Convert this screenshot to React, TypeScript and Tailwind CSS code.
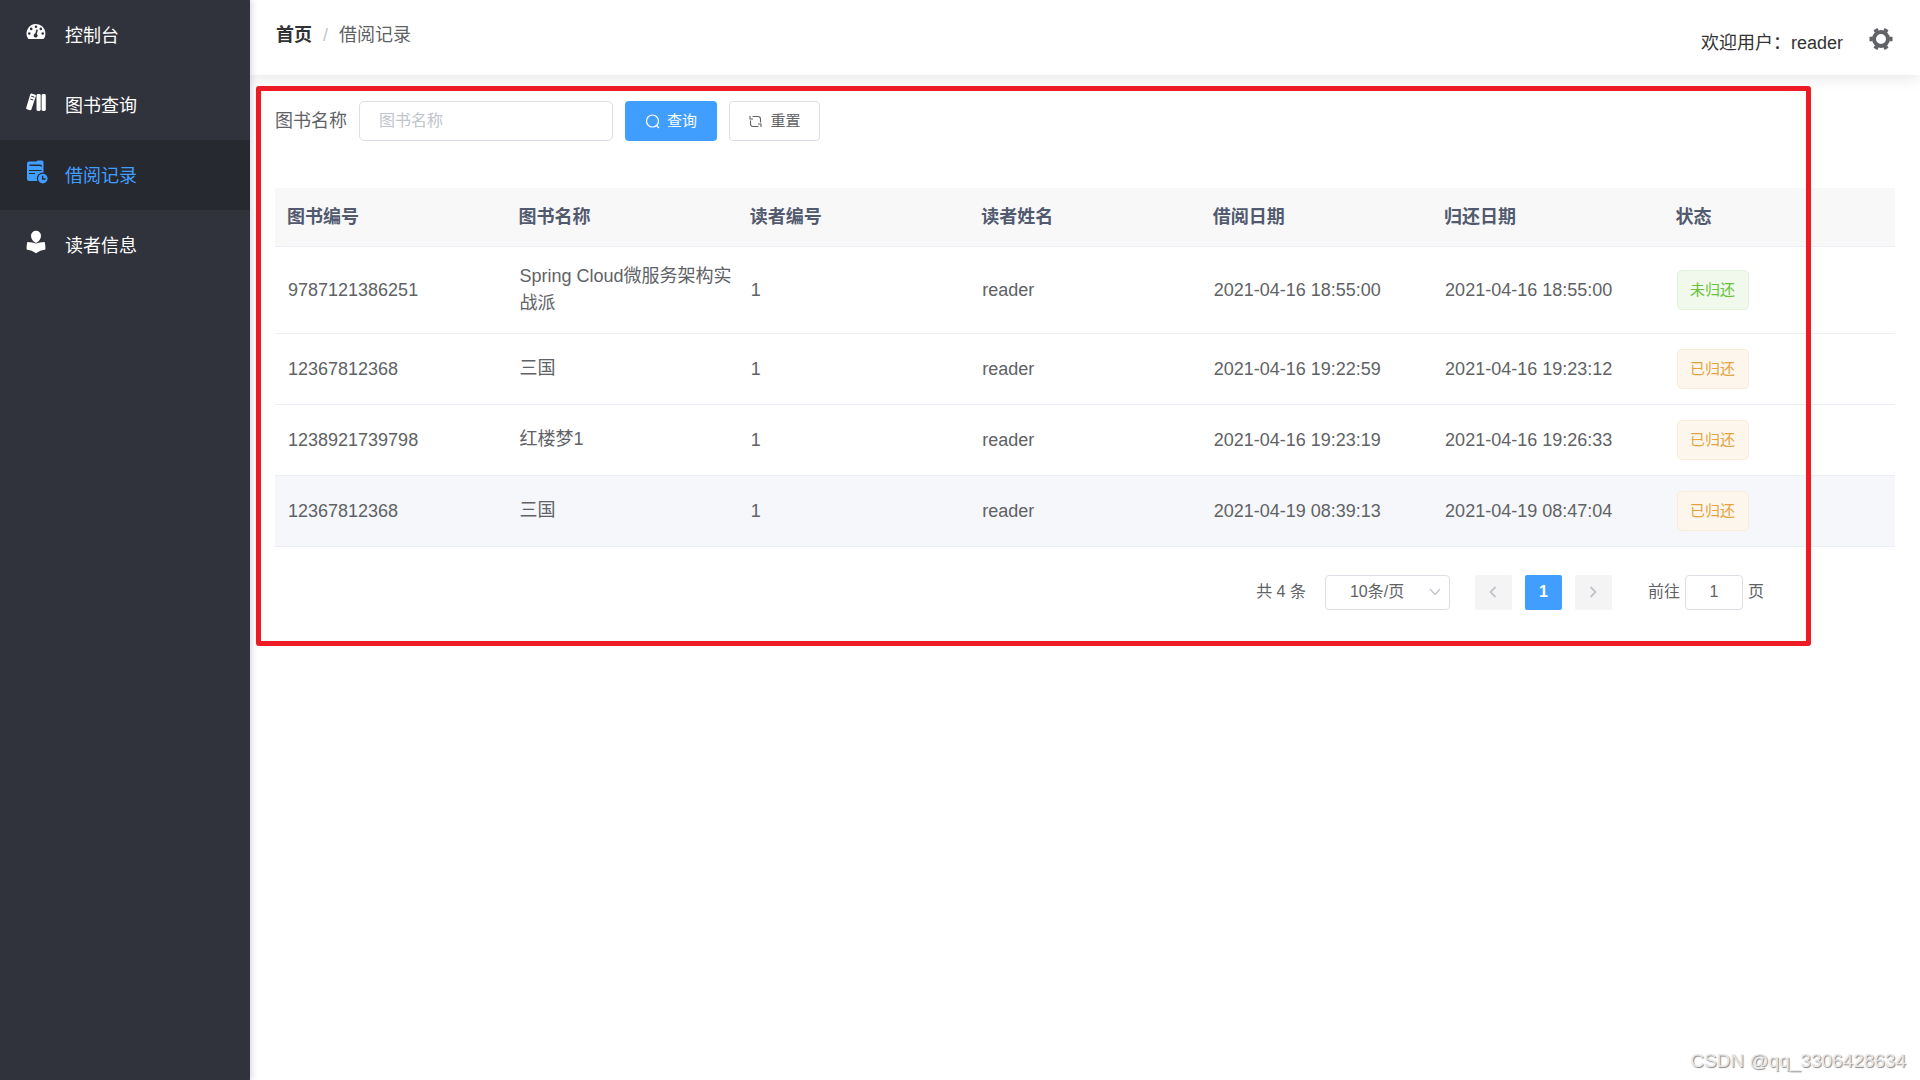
import * as React from "react";
import clsx from "clsx";

interface BorrowRecord {
  isbn: string;
  title: string;
  readerId: string;
  readerName: string;
  borrowedAt: string;
  returnedAt: string;
  returned: boolean;
}

const columns = ["图书编号", "图书名称", "读者编号", "读者姓名", "借阅日期", "归还日期", "状态"];

const records: BorrowRecord[] = [
  {
    isbn: "9787121386251",
    title: "Spring Cloud微服务架构实战派",
    readerId: "1",
    readerName: "reader",
    borrowedAt: "2021-04-16 18:55:00",
    returnedAt: "2021-04-16 18:55:00",
    returned: false,
  },
  {
    isbn: "12367812368",
    title: "三国",
    readerId: "1",
    readerName: "reader",
    borrowedAt: "2021-04-16 19:22:59",
    returnedAt: "2021-04-16 19:23:12",
    returned: true,
  },
  {
    isbn: "1238921739798",
    title: "红楼梦1",
    readerId: "1",
    readerName: "reader",
    borrowedAt: "2021-04-16 19:23:19",
    returnedAt: "2021-04-16 19:26:33",
    returned: true,
  },
  {
    isbn: "12367812368",
    title: "三国",
    readerId: "1",
    readerName: "reader",
    borrowedAt: "2021-04-19 08:39:13",
    returnedAt: "2021-04-19 08:47:04",
    returned: true,
  },
];

function DashboardIcon() {
  return (
    <svg viewBox="0 0 20 20" className="size-5" aria-hidden="true">
      <path
        fill="currentColor"
        fillRule="evenodd"
        d="M10 2a9.5 9.5 0 0 1 9.4 9.5c0 1.9-.5 3.6-1.4 5.1q-.3.4-.8.4H2.800q-.5 0-.8-.4A9.500 9.500 0 0 1 10 2Zm0 1.500a1.300 1.300 0 1 0 0 2.600 1.300 1.300 0 0 0 0-2.600ZM5.200 5.600a1.300 1.300 0 1 0 0 2.600 1.300 1.300 0 0 0 0-2.600Zm9.600 0a1.300 1.300 0 1 0 0 2.600 1.300 1.300 0 0 0 0-2.600ZM3.300 10.200a1.300 1.300 0 1 0 0 2.600 1.300 1.300 0 0 0 0-2.600Zm13.400 0a1.300 1.300 0 1 0 0 2.600 1.300 1.300 0 0 0 0-2.600ZM10.400 7.400l-1.100 4.200a2 2 0 1 0 1.500.3l1.100-4.200Z"
      />
    </svg>
  );
}

function BooksIcon() {
  return (
    <svg viewBox="0 0 20 20" className="size-5" aria-hidden="true">
      <rect x="10.500" y="2" width="4.200" height="17" rx="1.400" fill="currentColor" />
      <rect x="15.600" y="2" width="4.200" height="17" rx="1.400" fill="currentColor" />
      <path
        fill="currentColor"
        d="M5.600 1.500 9.200 2.700q1 .4.700 1.400L5.400 17.500q-.5 1-1.500.7L1 17.300Q-.2 16.800.2 15.800L4.300 2.300Q4.700 1.200 5.600 1.500Z"
      />
      <path d="m5.200 4.200 3.200 1M4.300 7l3 1" stroke="#30333c" strokeWidth="1" />
    </svg>
  );
}

function RecordIcon() {
  return (
    <svg viewBox="0 0 22 24" className="h-6 w-[22px]" aria-hidden="true">
      <path
        fill="currentColor"
        d="M3 1.500h7.500l1-1h4.500q1.500 0 1.500 1.500v19H3q-2 0-2-2v-15.500q0-2 2-2Z"
      />
      <path d="M3.500 5.200h10q2 0 2 1.300" fill="none" stroke="#272930" strokeWidth="1.400" />
      <path d="M3 10.500h12.500M3 13.500h6" stroke="#272930" strokeWidth="1.200" />
      <circle cx="16.800" cy="18.600" r="6" fill="#272930" />
      <circle cx="16.800" cy="18.600" r="4.800" fill="currentColor" />
      <path d="M16.600 15.800v3.200h3" fill="none" stroke="#272930" strokeWidth="1.300" />
    </svg>
  );
}

function ReaderIcon() {
  return (
    <svg viewBox="0 0 20 24" className="h-6 w-5" aria-hidden="true">
      <path
        fill="currentColor"
        d="M10 .8a5 5 0 0 1 5 5c0 2.400-1.300 4.600-2.700 5.600Q11.200 12 10 13q-1.200-1-2.300-1.600C6.300 10.400 5 8.200 5 5.800a5 5 0 0 1 5-5ZM1.500 12q5 0 8.500 1.500Q13.500 12 18.500 12q.9 1 .9 7.500-5.500.5-9.400 3.700Q6.100 20 .6 19.500q0-6.500.9-7.500Z"
      />
    </svg>
  );
}

function GearIcon() {
  return (
    <svg viewBox="0 0 24 24" className="size-6" aria-hidden="true">
      <circle cx="12" cy="12" r="7" fill="none" stroke="currentColor" strokeWidth="4" />
      <path
        fill="currentColor"
        d="M.5 9.800h3v4.400h-3ZM20.500 9.800h3v4.400h-3ZM4.500 3.200 8.300 1l1.500 2.600-3.800 2.200ZM15.700 1l3.800 2.200L18 5.800l-3.800-2.200ZM6 18.200l3.800 2.200L8.300 23l-3.800-2.200ZM18 18.200l1.500 2.600-3.800 2.200-1.500-2.600Z"
      />
    </svg>
  );
}

const menu = [
  { label: "控制台", icon: DashboardIcon },
  { label: "图书查询", icon: BooksIcon },
  { label: "借阅记录", icon: RecordIcon, active: true },
  { label: "读者信息", icon: ReaderIcon },
];

function Sidebar() {
  return (
    <aside className="z-10 w-[250px] shrink-0 bg-[#30333c] shadow-[2px_0_6px_rgba(0,0,0,0.15)]">
      <nav>
        {menu.map(({ label, icon: Icon, active }) => (
          <a
            key={label}
            href="#"
            className={clsx(
              "flex h-[70px] items-center gap-[15px] pt-[2px] pl-[26px] text-lg",
              active ? "bg-[#272930] text-[#409eff]" : "text-white"
            )}
          >
            <span className="flex w-6 pb-2">
              <Icon />
            </span>
            {label}
          </a>
        ))}
      </nav>
    </aside>
  );
}

function Header() {
  return (
    <header className="flex h-[75px] items-start justify-between pr-[27px] pl-[26px] shadow-[0_3px_15px_rgba(0,0,0,0.1)]">
      <nav className="flex h-[69px] items-center text-lg" aria-label="breadcrumb">
        <a href="#" className="font-bold text-[#303133]">
          首页
        </a>
        <span className="px-[11px] text-[#c0c4cc]">/</span>
        <span className="text-[#606266]">借阅记录</span>
      </nav>
      <div className="flex h-[78px] items-center gap-[26px] text-lg text-[#333333]">
        <span className="pt-2">欢迎用户：reader</span>
        <button type="button" aria-label="设置" className="text-[#606266]">
          <GearIcon />
        </button>
      </div>
    </header>
  );
}

function SearchForm() {
  const [keyword, setKeyword] = React.useState("");

  return (
    <form className="flex items-center" onSubmit={(e) => e.preventDefault()}>
      <label htmlFor="book-name" className="pr-3 text-lg text-[#606266]">
        图书名称
      </label>
      <input
        id="book-name"
        value={keyword}
        onChange={(e) => setKeyword(e.target.value)}
        placeholder="图书名称"
        className="h-10 w-[254px] rounded-[5px] border border-[#dcdfe6] px-[19px] text-base text-[#606266] placeholder:text-[#c0c4cc]"
      />
      <button
        type="submit"
        className="ml-3 flex h-10 w-[92px] items-center justify-center gap-[7px] rounded-[4px] bg-[#409eff] text-[15px] text-white"
      >
        <svg viewBox="0 0 15 15" className="size-[15px]" fill="none" stroke="currentColor" strokeWidth="1.200" aria-hidden="true">
          <circle cx="7.500" cy="7" r="6" />
          <path d="m11.500 11.500 2.500 2.500" />
        </svg>
        查询
      </button>
      <button
        type="button"
        onClick={() => setKeyword("")}
        className="ml-3 flex h-10 w-[91px] items-center justify-center gap-[7px] rounded-[4px] border border-[#dcdfe6] text-[15px] text-[#606266]"
      >
        <svg viewBox="0 0 15 15" className="size-[15px]" fill="none" stroke="currentColor" strokeWidth="1.100" aria-hidden="true">
          <path d="M4.500 2.500H10q2.500 0 2.500 2.500v3.500M10.500 12.500H5Q2.500 12.500 2.500 10V6.500" />
          <path d="M2 2v3h3M13 13v-3h-3" />
        </svg>
        重置
      </button>
    </form>
  );
}

function StatusTag({ returned }: { returned: boolean }) {
  return (
    <span
      className={clsx(
        "inline-flex h-10 w-[72px] items-center justify-center rounded-[5px] border align-middle text-[15px]",
        returned
          ? "border-[#faecd8] bg-[#fdf6ec] text-[#e6a23c]"
          : "border-[#e1f3d8] bg-[#f0f9eb] text-[#67c23a]"
      )}
    >
      {returned ? "已归还" : "未归还"}
    </span>
  );
}

function RecordTable() {
  return (
    <table className="w-full table-fixed border-collapse text-left text-lg">
      <thead>
        <tr className="h-[58px] border-b border-[#ebeef5] bg-[#f8f8f9] text-[#515a6e]">
          {columns.map((name) => (
            <th key={name} className="px-3 font-bold">
              {name}
            </th>
          ))}
        </tr>
      </thead>
      <tbody className="text-[#606266]">
        {records.map((r, i) => (
          <tr
            key={r.borrowedAt}
            className={clsx(
              "h-[71px] border-b border-[#ebeef5]",
              i === records.length - 1 && "bg-[#f5f7fa]"
            )}
          >
            <td className="pl-[13px]">{r.isbn}</td>
            <td className="py-4 pr-1 pl-[13px] leading-[27px]">{r.title}</td>
            <td className="pl-[13px]">{r.readerId}</td>
            <td className="pl-[13px]">{r.readerName}</td>
            <td className="pl-[13px]">{r.borrowedAt}</td>
            <td className="pl-[13px]">{r.returnedAt}</td>
            <td className="pl-[13px]">
              <StatusTag returned={r.returned} />
            </td>
          </tr>
        ))}
      </tbody>
    </table>
  );
}

function Chevron({ d }: { d: string }) {
  return (
    <svg viewBox="0 0 14 14" className="size-[14px]" fill="none" stroke="#c0c4cc" strokeWidth="1.800" aria-hidden="true">
      <path d={d} />
    </svg>
  );
}

function Pagination() {
  return (
    <div className="flex h-[35px] items-center justify-end pr-[131px] text-base text-[#606266]">
      <span>共 4 条</span>
      <div className="relative ml-[19px]">
        <select
          aria-label="每页条数"
          className="h-[35px] w-[125px] appearance-none rounded-[4px] border border-[#dcdfe6] pr-8 pl-6"
        >
          <option>10条/页</option>
        </select>
        <span className="pointer-events-none absolute inset-y-0 right-2 flex items-center">
          <svg viewBox="0 0 14 14" className="size-[14px]" fill="none" stroke="#c0c4cc" strokeWidth="1.200" aria-hidden="true">
            <path d="m2 4 5 5.500L12 4" />
          </svg>
        </span>
      </div>
      <div className="ml-[25px] flex gap-[13px]">
        <button type="button" aria-label="上一页" disabled className="flex h-[35px] w-[37px] items-center justify-center rounded-[2px] bg-[#f4f4f5]">
          <Chevron d="M9.500 2 4.500 7l5 5" />
        </button>
        <button type="button" className="h-[35px] w-[37px] rounded-[2px] bg-[#409eff] font-bold text-white">
          1
        </button>
        <button type="button" aria-label="下一页" disabled className="flex h-[35px] w-[37px] items-center justify-center rounded-[2px] bg-[#f4f4f5]">
          <Chevron d="m4.500 2 5 5-5 5" />
        </button>
      </div>
      <label className="ml-9 flex items-center gap-[5px]">
        前往
        <input
          defaultValue="1"
          className="h-[35px] w-[58px] rounded-[4px] border border-[#dcdfe6] text-center"
        />
        页
      </label>
    </div>
  );
}

export default function App() {
  return (
    <div className="relative flex min-h-screen bg-white font-['Liberation_Sans','Noto_Sans_CJK_SC',sans-serif]">
      <Sidebar />
      <div className="min-w-0 flex-1">
        <Header />
        <main className="relative px-[25px] pt-[26px] pb-9">
          <SearchForm />
          <div className="mt-[47px]">
            <RecordTable />
          </div>
          <div className="mt-7">
            <Pagination />
          </div>
          {/* Highlight frame */}
          <div className="pointer-events-none absolute top-[11px] right-[109px] bottom-0 left-[6px] rounded-[3px] border-5 border-[#ed1c24]" />
        </main>
      </div>
      {/* Watermark */}
      <div className="pointer-events-none absolute right-[14px] bottom-[5px] text-[19px] text-[#e8e8e8] [text-shadow:1px_1px_1px_#888888]">
        CSDN @qq_3306428634
      </div>
    </div>
  );
}
